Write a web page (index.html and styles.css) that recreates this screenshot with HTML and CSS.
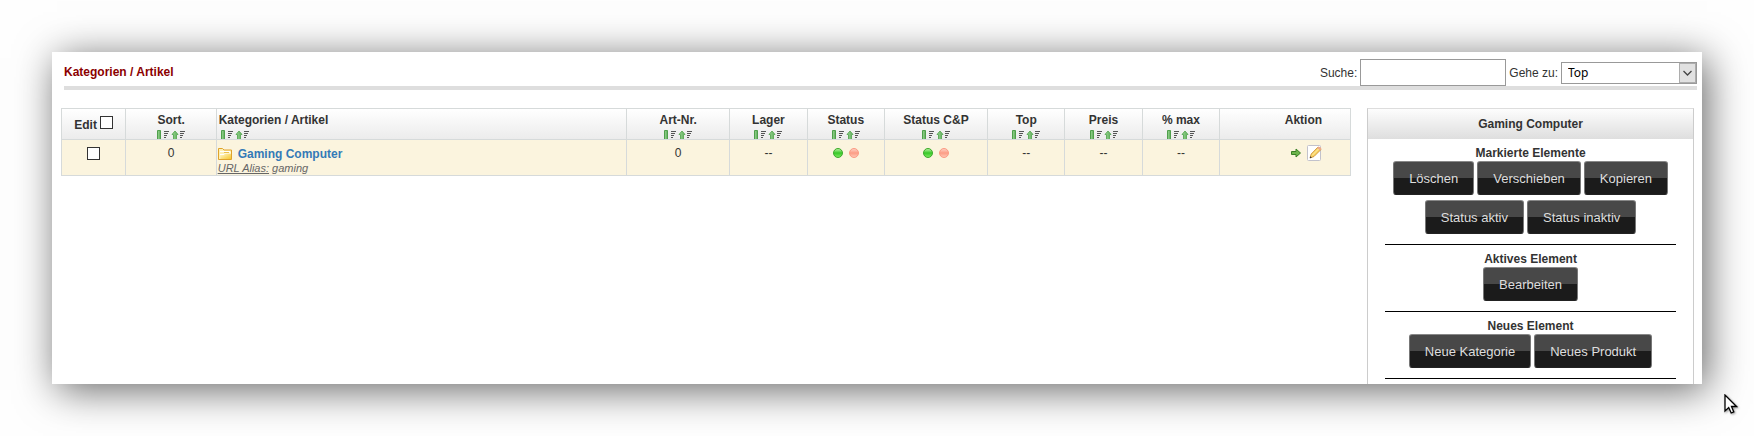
FILE: index.html
```html
<!DOCTYPE html>
<html lang="de">
<head>
    <meta charset="UTF-8">
    <meta name="viewport" content="width=device-width, initial-scale=1.0">
    <title>Kategorien / Artikel</title>
    <link rel="stylesheet" href="styles.css">
</head>
<body>

<svg class="sprite" aria-hidden="true">
    <defs>
        <linearGradient id="gGreen" x1="0" y1="0" x2="1" y2="0">
            <stop offset="0" stop-color="#9ad894"/>
            <stop offset="1" stop-color="#5cab58"/>
        </linearGradient>
        <linearGradient id="gFolder" x1="0" y1="0" x2="1" y2="1">
            <stop offset="0" stop-color="#fffbd6"/>
            <stop offset="1" stop-color="#f6c62c"/>
        </linearGradient>
    </defs>
    <symbol id="sort-down" viewBox="0 0 14 9">
        <path d="M.5 9V.5h3V9" fill="url(#gGreen)" stroke="#4f9f4c"/>
        <path d="M7 1h5v1H7zM7 3h4v1H7zM7 5h3v1H7zM7 7h2v1H7z" fill="#555" shape-rendering="crispEdges"/>
    </symbol>
    <symbol id="sort-up" viewBox="0 0 14 9">
        <path d="M2.5 9V4.500H1L4 1l3 3.500H5.500V9" fill="url(#gGreen)" stroke="#62ae5e"/>
        <path d="M9 1h5v1H9zM9 3h4v1H9zM9 5h3v1H9zM9 7h2v1H9z" fill="#555" shape-rendering="crispEdges"/>
    </symbol>
</svg>

<div class="window">
    <header>
        <h1>Kategorien / Artikel</h1>
        <form class="search">
            <label for="search">Suche:</label>
            <input type="text" id="search" name="search">
            <label for="goto">Gehe zu:</label>
            <span class="select">
                <select id="goto" name="cPath">
                    <option>Top</option>
                </select>
                <svg viewBox="0 0 17 20"><rect x=".5" y=".5" width="16" height="19" fill="#e1e1e1" stroke="#adadad"/><path d="M4.500 8l4 4 4-4" fill="none" stroke="#444" stroke-width="1.300"/></svg>
            </span>
        </form>
    </header>

    <main>
        <table>
            <colgroup>
                <col class="w5"><col class="w7"><col><col class="w8"><col class="w6"><col class="w6"><col class="w8"><col class="w6"><col class="w6"><col class="w6"><col class="tools-col">
            </colgroup>
            <thead>
                <tr>
                    <th class="edit"><label for="all">Edit</label> <input type="checkbox" id="all"></th>
                    <th>Sort.<div class="sort"><a href="#" aria-label="absteigend"><svg><use href="#sort-down"/></svg></a><a href="#" aria-label="aufsteigend"><svg><use href="#sort-up"/></svg></a></div></th>
                    <th class="name">Kategorien / Artikel<div class="sort"><a href="#" aria-label="absteigend"><svg><use href="#sort-down"/></svg></a><a href="#" aria-label="aufsteigend"><svg><use href="#sort-up"/></svg></a></div></th>
                    <th>Art-Nr.<div class="sort"><a href="#" aria-label="absteigend"><svg><use href="#sort-down"/></svg></a><a href="#" aria-label="aufsteigend"><svg><use href="#sort-up"/></svg></a></div></th>
                    <th>Lager<div class="sort"><a href="#" aria-label="absteigend"><svg><use href="#sort-down"/></svg></a><a href="#" aria-label="aufsteigend"><svg><use href="#sort-up"/></svg></a></div></th>
                    <th>Status<div class="sort"><a href="#" aria-label="absteigend"><svg><use href="#sort-down"/></svg></a><a href="#" aria-label="aufsteigend"><svg><use href="#sort-up"/></svg></a></div></th>
                    <th>Status C&amp;P<div class="sort"><a href="#" aria-label="absteigend"><svg><use href="#sort-down"/></svg></a><a href="#" aria-label="aufsteigend"><svg><use href="#sort-up"/></svg></a></div></th>
                    <th>Top<div class="sort"><a href="#" aria-label="absteigend"><svg><use href="#sort-down"/></svg></a><a href="#" aria-label="aufsteigend"><svg><use href="#sort-up"/></svg></a></div></th>
                    <th>Preis<div class="sort"><a href="#" aria-label="absteigend"><svg><use href="#sort-down"/></svg></a><a href="#" aria-label="aufsteigend"><svg><use href="#sort-up"/></svg></a></div></th>
                    <th>% max<div class="sort"><a href="#" aria-label="absteigend"><svg><use href="#sort-down"/></svg></a><a href="#" aria-label="aufsteigend"><svg><use href="#sort-up"/></svg></a></div></th>
                    <th class="action">Aktion</th>
                </tr>
            </thead>
            <tbody>
                <tr>
                    <td class="check"><input type="checkbox" aria-label="Gaming Computer"></td>
                    <td>0</td>
                    <td class="name">
                        <a href="#" class="category">
                            <svg class="folder" viewBox="0 0 14 12"><path d="M.5 11.500V.5h4l1.500 1.500h7.500v9.500z" fill="#fdf0b4" stroke="#dfa32c"/><path d="M2.500 11V6.500h3.500L7.500 5h5.500v6z" fill="url(#gFolder)"/><path d="M2 6.500h4L7.500 5H13M2 3.500h10" fill="none" stroke="#fff"/><path d="M6 4.500h5" stroke="#ecc04c"/></svg>
                            Gaming Computer
                        </a>
                        <div class="alias"><u>URL Alias:</u> gaming</div>
                    </td>
                    <td>0</td>
                    <td>--</td>
                    <td><div class="status"><span class="dot green"></span><a href="#" class="dot red" aria-label="deaktivieren"></a></div></td>
                    <td><div class="status"><span class="dot green"></span><a href="#" class="dot red" aria-label="deaktivieren"></a></div></td>
                    <td>--</td>
                    <td>--</td>
                    <td>--</td>
                    <td class="action">
                        <div class="tools">
                            <svg class="arrow" viewBox="0 0 10 10"><path d="M.5 3.500H5V1l4.500 4L5 9V6.500H.5z" fill="#6db54c" stroke="#3a7f27"/></svg>
                            <a href="#" aria-label="Bearbeiten"><svg class="pencil" viewBox="0 0 15 16"><rect x=".5" y=".5" width="13" height="15" rx="1" fill="#fff" stroke="#c2c2cc"/><path d="M3 13l1.200-4L11 2l3 2.500-7 7z" fill="#f8d264" stroke="#c98a2e" stroke-width=".8"/><path d="M10 3l1.500-1.500q2.500 0 3 2.500L13 5.500z" fill="#ecab8c"/><path d="M5 10.500L11.500 4" stroke="#fff0a8"/><path d="M2.800 13.200l.6-2 1.400 1.400z" fill="#333"/></svg></a>
                        </div>
                    </td>
                </tr>
            </tbody>
        </table>

        <aside>
            <h2>Gaming Computer</h2>
            <section>
                <h3>Markierte Elemente</h3>
                <div class="buttons">
                    <button type="button">Löschen</button>
                    <button type="button">Verschieben</button>
                    <button type="button">Kopieren</button>
                    <button type="button">Status aktiv</button>
                    <button type="button">Status inaktiv</button>
                </div>
            </section>
            <section>
                <h3>Aktives Element</h3>
                <div class="buttons">
                    <button type="button">Bearbeiten</button>
                </div>
            </section>
            <section>
                <h3>Neues Element</h3>
                <div class="buttons">
                    <button type="button">Neue Kategorie</button>
                    <button type="button">Neues Produkt</button>
                </div>
            </section>
        </aside>
    </main>
</div>

<svg class="cursor" viewBox="0 0 14 21"><path d="M1 1v16l3.700-3.400L7.200 19l2.600-1.100L7.500 12.500h5z" fill="#fff" stroke="#000" stroke-width="1.300"/></svg>

</body>
</html>
```
FILE: styles.css
```css
* {
    box-sizing: border-box;
}

body {
    margin: 0;
    padding: 52px;
    background: #fefefe;
    color: #333;
    font-family: "Liberation Sans", Arial, sans-serif;
    font-size: 12px;
    line-height: 16px;
    position: relative;
}

h1, h2, h3 {
    margin: 0;
    font-size: 12px;
    line-height: 16px;
}

svg {
    display: block;
}

.sprite {
    position: absolute;
    width: 0;
    height: 0;
}

.window {
    background: #fff;
    padding: 7px 5px 0 9px;
    box-shadow: 5px 6px 38px rgba(0, 0, 0, 0.6);
}

header {
    display: flex;
    justify-content: space-between;
    align-items: center;
    margin: 0 0 18px 3px;
    border-bottom: 4px solid #dedede;
}

h1 {
    color: #8b0000;
    padding-bottom: 2px;
}

.search {
    display: flex;
    align-items: center;
    gap: 3px;
}

.search input {
    width: 146px;
    height: 27px;
    border: 1px solid #999;
    background: #fff;
}

.select {
    position: relative;
}

.select select {
    display: block;
    appearance: none;
    width: 136px;
    height: 22px;
    padding: 0 6px;
    border: 1px solid #999;
    border-radius: 0;
    background: #fff;
    color: #000;
    font: 12px "Noto Sans", sans-serif;
}

.select svg {
    position: absolute;
    top: 1px;
    right: 1px;
    width: 17px;
    height: 20px;
    pointer-events: none;
}

main {
    display: flex;
    gap: 16px;
    padding-right: 3px;
}

/* list */

table {
    width: 79%;
    align-self: flex-start;
    border-collapse: collapse;
    table-layout: fixed;
    border: 1px solid #cdd3d3;
}

.w5 { width: 5%; }
.w6 { width: 6%; }
.w7 { width: 7%; }
.w8 { width: 8%; }
.tools-col { width: 131px; }

thead tr {
    background: linear-gradient(#fff, #ebebeb);
}

th, td {
    border: 1px solid #d6dada;
    text-align: center;
    vertical-align: top;
}

th {
    height: 31px;
    padding: 3px 0 0;
    white-space: nowrap;
}

td {
    height: 36px;
    padding: 5px 0 0;
    background: #fbf4de;
}

th.edit {
    vertical-align: middle;
    padding: 0;
}

th.name, td.name {
    text-align: left;
    padding-left: 2px;
}

td.name {
    padding: 7px 0 0 1px;
}

th.action, td.action {
    text-align: right;
    padding-right: 28px;
}

input[type="checkbox"] {
    appearance: none;
    width: 13px;
    height: 13px;
    margin: 0;
    border: 1px solid #333;
    background: #fff;
}

.check input {
    display: block;
    margin: 2px auto 0;
}

.sort {
    display: flex;
    justify-content: center;
    margin-top: 2px;
}

.name .sort {
    justify-content: flex-start;
    padding-left: 2px;
}

.sort svg {
    width: 14px;
    height: 9px;
}

.category {
    display: flex;
    align-items: center;
    gap: 6px;
    color: #337ab7;
    font-weight: bold;
    line-height: 14px;
    text-decoration: none;
}

.category:hover {
    text-decoration: underline;
}

.folder {
    width: 14px;
    height: 12px;
}

.alias {
    color: #666;
    font-size: 11px;
    line-height: 14px;
    font-style: italic;
}

.status, .tools {
    display: flex;
    justify-content: center;
    align-items: center;
    gap: 6px;
    height: 16px;
}

.tools {
    justify-content: flex-end;
}

.dot {
    width: 10px;
    height: 10px;
    border-radius: 50%;
}

.green {
    border: 1px solid #3caa2d;
    background: linear-gradient(#b4f09c, #38c828 50%, #7be85c);
}

.red {
    border: 1px solid #fb9b84;
    background: linear-gradient(#fdd0c2, #fc9c84 50%, #fec6b4);
}

.arrow {
    width: 10px;
    height: 10px;
}

.pencil {
    width: 15px;
    height: 16px;
}

/* sidebar */

aside {
    flex: 1;
    border: 1px solid #ccc;
    border-top-color: #ddd;
    border-bottom: 0;
    padding-bottom: 5px;
    text-align: center;
}

h2 {
    padding: 7px 0;
    background: linear-gradient(#fdfdfd, #dedede);
}

section {
    margin: 0 17px;
    padding: 6px 0 10px;
    border-bottom: 1px solid #000;
}

.buttons {
    display: flex;
    flex-wrap: wrap;
    justify-content: center;
    gap: 5px 3px;
}

button {
    height: 34px;
    padding: 0 15px;
    border: 1px solid #777;
    border-color: #888 #777 #222 #777;
    border-radius: 3px;
    background: linear-gradient(#484848 50%, #1b1b1b 50%);
    color: #ddd;
    font: 13px "Liberation Sans", Arial, sans-serif;
    cursor: pointer;
}

button:hover {
    color: #fff;
}

.cursor {
    position: absolute;
    right: 16px;
    top: 394px;
    width: 14px;
    height: 21px;
    filter: drop-shadow(1px 1px 1px rgba(0, 0, 0, 0.4));
}
```
